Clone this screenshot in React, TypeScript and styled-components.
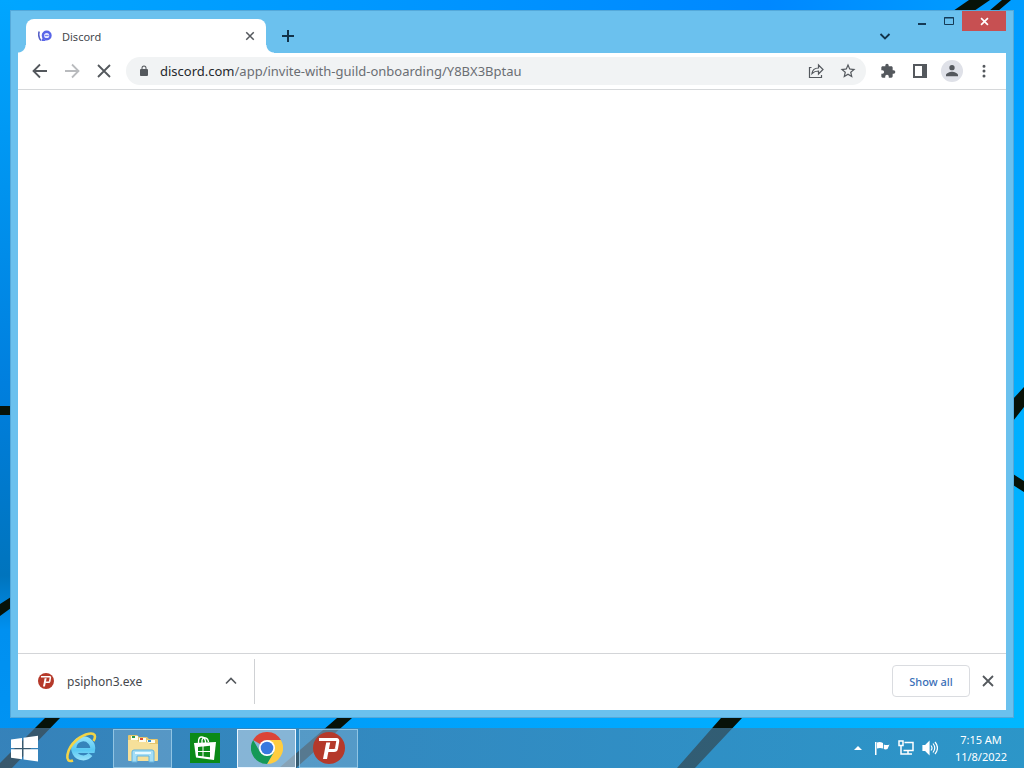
import React from "react";
import styled, { createGlobalStyle, css } from "styled-components";

const GlobalStyle = createGlobalStyle`
  * { box-sizing: border-box; }
  body { margin: 0; font-family: "Noto Sans", "Open Sans", sans-serif; font-size: 11px; }
  button, input { font: inherit; }
  svg { display: block; flex: none; }
`;

const Desktop = styled.div`
  position: relative;
  isolation: isolate;
  display: flex;
  flex-direction: column;
  gap: 10px;
  min-height: 100vh;
  padding-top: 10px;
  overflow: hidden;
`;

const WallpaperArt = styled.svg`
  position: absolute;
  inset: 0;
  z-index: -1;
  width: 100%;
  height: 100%;
`;

const BrowserWindow = styled.main`
  flex: 1;
  display: flex;
  flex-direction: column;
  margin: 0 10px;
  padding: 0 7px 7px;
  background: #6bc1ee;
  border: 1px solid #55a9da;
`;

const TitleBar = styled.header`
  display: flex;
  align-items: flex-end;
  height: 42px;
  padding-left: 8px;
`;

const Tab = styled.div`
  position: relative;
  display: flex;
  align-items: center;
  width: 240px;
  height: 34px;
  padding: 0 8px 0 12px;
  background: #fff;
  border-radius: 8px 8px 0 0;
  color: #45484d;

  &::before,
  &::after {
    content: "";
    position: absolute;
    bottom: 0;
    width: 8px;
    height: 8px;
  }
  &::before {
    right: 100%;
    background: radial-gradient(circle at 0 0, transparent 7px, #fff 8px);
  }
  &::after {
    left: 100%;
    background: radial-gradient(circle at 100% 0, transparent 7px, #fff 8px);
  }
`;

const TabTitle = styled.span`
  flex: 1;
  padding-left: 10px;
`;

const IconButton = styled.button<{ $size?: number; $faded?: boolean }>`
  display: flex;
  flex: none;
  align-items: center;
  justify-content: center;
  width: ${(p) => p.$size ?? 32}px;
  height: ${(p) => Math.min(p.$size ?? 32, 28)}px;
  padding: 0;
  border: 0;
  border-radius: 14px;
  background: transparent;
  color: ${(p) => (p.$faded ? "#b9bbbe" : "#54585d")};
`;

const StripButton = styled(IconButton)`
  height: 34px;
  color: #12334a;
`;

const StripSpacer = styled.div`
  flex: 1;
`;

const CaptionButtons = styled.div`
  display: flex;
  align-self: flex-start;
`;

const CaptionButton = styled.button<{ $close?: boolean }>`
  display: flex;
  align-items: center;
  justify-content: center;
  width: ${(p) => (p.$close ? 44 : 27)}px;
  height: 20px;
  padding: 0;
  border: 0;
  background: ${(p) => (p.$close ? "#c75052" : "transparent")};
  color: ${(p) => (p.$close ? "#fff" : "#153a56")};
`;

const Toolbar = styled.nav`
  display: flex;
  align-items: center;
  height: 37px;
  padding: 0 6px;
  background: #fff;
  border-bottom: 1px solid #d6d8da;
`;

const AddressBar = styled.form`
  display: flex;
  flex: 1;
  align-items: center;
  height: 28px;
  margin: 0 6px;
  padding: 0 2px 0 12px;
  background: #f1f3f4;
  border-radius: 14px;
  color: #54585d;
  font-size: 13px;
`;

const Host = styled.label`
  padding-left: 10px;
  color: #25282c;
`;

const PathInput = styled.input`
  flex: 1;
  min-width: 0;
  padding: 0;
  border: 0;
  outline: 0;
  background: transparent;
  color: #6a6e73;
`;

const Avatar = styled.span`
  display: flex;
  align-items: center;
  justify-content: center;
  width: 22px;
  height: 22px;
  border-radius: 50%;
  background: #dfe1e8;
`;

const Page = styled.section`
  flex: 1;
  background: #fff;
`;

const DownloadShelf = styled.footer`
  display: flex;
  align-items: center;
  height: 57px;
  padding: 0 2px 2px 0;
  background: #fff;
  border-top: 1px solid #d3d5d8;
`;

const DownloadItem = styled.div`
  display: flex;
  align-items: center;
  width: 237px;
  height: 45px;
  padding: 0 7px 0 20px;
  border-right: 1px solid #cfd1d4;
  color: #45484d;
  font-size: 12px;
`;

const FileName = styled.span`
  flex: 1;
  padding-left: 13px;
`;

const ShowAll = styled.button`
  width: 78px;
  height: 32px;
  margin-left: auto;
  margin-right: 2px;
  padding: 0;
  background: #fff;
  border: 1px solid #dadce0;
  border-radius: 4px;
  color: #3a6fb8;
  font-weight: 500;
`;

const Taskbar = styled.footer`
  display: flex;
  align-items: center;
  height: 40px;
  padding-right: 9px;
  background: linear-gradient(90deg, rgba(80, 122, 158, 0.67), rgba(66, 133, 173, 0.67));
`;

const TaskButton = styled.button<{ $state?: "open" | "active" }>`
  display: flex;
  align-items: center;
  justify-content: center;
  width: 59px;
  height: 39px;
  margin-right: 3px;
  padding: 0;
  border: 1px solid transparent;
  background: transparent;
  ${(p) =>
    p.$state === "open" &&
    css`
      border-color: rgba(170, 215, 240, 0.7);
      background: rgba(165, 195, 220, 0.3);
    `}
  ${(p) =>
    p.$state === "active" &&
    css`
      border-color: #eaf6ff;
      background: rgba(190, 212, 230, 0.6);
    `}
`;

const StartButton = styled(TaskButton)`
  width: 48px;
`;

const Tray = styled.div`
  display: flex;
  align-items: center;
  margin-left: auto;
`;

const TrayButton = styled(IconButton)`
  color: #fff;
`;

const Clock = styled.time`
  width: 68px;
  margin-left: 5px;
  color: #fff;
  line-height: 17px;
  text-align: center;
  white-space: nowrap;
`;

function Wallpaper() {
  return (
    <WallpaperArt viewBox="0 0 1024 768" preserveAspectRatio="none" aria-hidden="true">
      <defs>
        <linearGradient id="sky" x1="0" x2="1" y1="0" y2="0">
          <stop offset="0" stopColor="#00a6ff" />
          <stop offset=".75" stopColor="#0088ff" />
          <stop offset="1" stopColor="#00a0ff" />
        </linearGradient>
        <linearGradient id="left" x1="0" x2="0" y1="0" y2="1">
          <stop offset="0" stopColor="#00a6ff" />
          <stop offset=".5" stopColor="#007fde" />
          <stop offset=".75" stopColor="#0074bd" />
          <stop offset=".82" stopColor="#0090f0" />
          <stop offset="1" stopColor="#0094f4" />
        </linearGradient>
        <linearGradient id="right" x1="0" x2="0" y1="0" y2="1">
          <stop offset="0" stopColor="#009cff" />
          <stop offset=".5" stopColor="#00aeff" />
          <stop offset="1" stopColor="#00b8ff" />
        </linearGradient>
        <linearGradient id="ground" x1="0" x2="1" y1="0" y2="0">
          <stop offset="0" stopColor="#0092f2" />
          <stop offset=".6" stopColor="#00a8ff" />
          <stop offset="1" stopColor="#00b8ff" />
        </linearGradient>
      </defs>
      <path fill="url(#sky)" d="M0 0h1024v384H0z" />
      <path fill="url(#ground)" d="M0 384h1024v384H0z" />
      <path fill="url(#left)" d="M0 0h14v768H0z" />
      <path fill="url(#right)" d="M1010 0h14v768h-14z" />
      <g fill="#071208">
        <path d="M953 11 969 0h21l-16 11zM989 11l13-11h9l-13 11z" />
        <path d="M0 406h11v9H0zM0 604l11-7v11l-11 8z" />
        <path d="M1013 399l11-12v20l-11 14zM1013 474l11 7v11l-11-7z" />
        <path d="M45 718h15L12 768H0v-5zM337 718h15l-56 50h-17zM721 718h21l-47 50h-18z" />
      </g>
    </WallpaperArt>
  );
}

type LineIconProps = { d: string; size?: number; width?: number };

function LineIcon({ d, size = 16, width = 2 }: LineIconProps) {
  return (
    <svg width={size} height={size} viewBox="0 0 16 16" fill="none" stroke="currentColor" strokeWidth={width} aria-hidden="true">
      <path d={d} />
    </svg>
  );
}

function SolidIcon({ d, size = 18 }: { d: string; size?: number }) {
  return (
    <svg width={size} height={size} viewBox="0 0 24 24" fill="currentColor" aria-hidden="true">
      <path fillRule="evenodd" d={d} />
    </svg>
  );
}

function DiscordIcon() {
  return (
    <svg width="14" height="14" viewBox="0 0 14 14" fill="none" aria-hidden="true">
      <path d="M1.200 2.500C.3 5.500.8 9 3 11.500" stroke="#5660c8" strokeWidth="1.600" />
      <circle cx="8.700" cy="6.500" r="3.800" stroke="#5865e8" strokeWidth="2.400" fill="#e8eaff" />
      <path d="M6.800 6.500h3.800" stroke="#7a83ee" strokeWidth="1.200" />
      <path d="M4.500 9 3.500 12h4.500z" fill="#5865e8" />
    </svg>
  );
}

function PsiphonIcon({ size }: { size: number }) {
  return (
    <svg width={size} height={size} viewBox="0 0 32 32" fill="none" aria-hidden="true">
      <circle cx="16" cy="16" r="16" fill="#b5392a" />
      <path d="M6 7.500h17.500q1.500 0 1.200 2l-1.200 7q-.4 2-2.500 2h-6.500" stroke="#fff" strokeWidth="3" />
      <path d="M13.200 10.500h4L14 27h-4z" fill="#fff" />
    </svg>
  );
}

function WindowsLogo() {
  return (
    <svg width="27" height="27" viewBox="0 0 27 27" fill="#fff" aria-hidden="true">
      <path d="M0 4.500 11 3v10H0zM12.500 2.800 27 .8V13H12.500zM0 14.300h11v10L0 22.800zM12.500 14.300H27v12.200l-14.500-2z" />
    </svg>
  );
}

function ExplorerEIcon() {
  return (
    <svg width="34" height="34" viewBox="0 0 34 34" fill="none" aria-hidden="true">
      <defs>
        <linearGradient id="ieBlue" x1="0" x2="0" y1="7" y2="31" gradientUnits="userSpaceOnUse">
          <stop offset="0" stopColor="#8fe0fb" />
          <stop offset=".5" stopColor="#58c8f3" />
          <stop offset="1" stopColor="#a2e6fc" />
        </linearGradient>
      </defs>
      <path d="M26.500 23.500A9.500 9.500 0 1 1 28.500 19.500H12" stroke="url(#ieBlue)" strokeWidth="5" />
      <path d="M9 29.500C0 33 2 18 12.500 9 21 2 31 .5 31 5.500c0 1.500-.5 3-1.500 4.500" stroke="#f2d448" strokeWidth="2.600" />
    </svg>
  );
}

function FilesIcon() {
  return (
    <svg width="32" height="30" viewBox="0 0 32 30" aria-hidden="true">
      <path d="M1 3q0-1 1-1h8l2 2h8l2 2h8q1 0 1 1v20H1z" fill="#e5c66d" />
      <path d="M4 3h7v4H4zM12 5h7v4h-7zM20 7h8v3h-8z" fill="#fffdf0" />
      <path d="M5 3h3v2H5z" fill="#2b9a4a" />
      <path d="M13 5h3v2h-3z" fill="#dd4b32" />
      <path d="M21 7h3v2h-3z" fill="#3591d0" />
      <path d="M1 7h9l2 2h9l2 2h8v16q0 1-1 1H2q-1 0-1-1z" fill="#f6e09a" />
      <path d="M5 29V19q0-2 2-2h18q2 0 2 2v10h-5v-6H10v6z" fill="#a5def5" stroke="#61b3df" />
      <path d="M8 20h16" stroke="#e8faff" strokeWidth="2" />
    </svg>
  );
}

function StoreIcon() {
  return (
    <svg width="30" height="30" viewBox="0 0 30 30" fill="none" aria-hidden="true">
      <path d="M0 0h30v30H0z" fill="#0b8a17" />
      <path d="M8.500 11V8.500c0-6 6-6 7 0V10M12 10V7c1-3.500 6-3 6.500 2" stroke="#fff" strokeWidth="1.300" />
      <path d="m4 10 22-1-2 18-18-2.500z" fill="#fff" />
      <path d="m8 14 4.500-.5V18H8zM13.500 13.400 20 12.800V18h-6.500zM8 19h4.500v4.300L8 22.800zM13.500 19H20v5.200l-6.500-.7z" fill="#0b8a17" />
    </svg>
  );
}

function ChromeIcon() {
  return (
    <svg width="32" height="32" viewBox="0 0 32 32" aria-hidden="true">
      <path d="M16 16 2.140 8A16 16 0 0 1 29.860 8z" fill="#db4437" />
      <path d="M16 8h13.860A16 16 0 0 1 16 32l6.930-12z" fill="#ffcd40" />
      <path d="M2.140 8 9.070 20l6.930 4 6.930-4L16 32A16 16 0 0 1 2.140 8z" fill="#159957" />
      <circle cx="16" cy="16" r="8" fill="#fff" />
      <circle cx="16" cy="16" r="6.300" fill="#3879df" />
    </svg>
  );
}

const cross = "M3 3l10 10M13 3 3 13";
const puzzle =
  "M20.500 11H19V7c0-1.100-.9-2-2-2h-4V3.500a2.500 2.500 0 0 0-5 0V5H4c-1.100 0-2 .9-2 2v3.800h1.500a2.700 2.700 0 0 1 0 5.400H2V20c0 1.100.9 2 2 2h3.800v-1.500a2.700 2.700 0 0 1 5.400 0V22H17c1.100 0 2-.9 2-2v-4h1.500a2.500 2.500 0 0 0 0-5z";
const star =
  "M22 9.240l-7.190-.62L12 2 9.190 8.630 2 9.240l5.460 4.730L5.820 21 12 17.270 18.180 21l-1.630-7.030L22 9.240zM12 15.400l-3.760 2.270 1-4.280-3.320-2.880 4.380-.38L12 6.100l1.710 4.040 4.380.38-3.320 2.880 1 4.280L12 15.400z";
const lock =
  "M18 8h-1V6a5 5 0 0 0-10 0v2H6a2 2 0 0 0-2 2v10c0 1.100.9 2 2 2h12a2 2 0 0 0 2-2V10a2 2 0 0 0-2-2zM9 8V6a3 3 0 0 1 6 0v2z";
const person = "M12 11a4 4 0 1 0 0-8 4 4 0 0 0 0 8zM3 20v-2c0-3 6-5 9-5s9 2 9 5v2z";

export default function App() {
  return (
    <>
      <GlobalStyle />
      <Desktop>
        <Wallpaper />
        <BrowserWindow>
          <TitleBar>
            <Tab>
              <DiscordIcon />
              <TabTitle>Discord</TabTitle>
              <IconButton $size={16} aria-label="Close tab">
                <LineIcon d={cross} size={12} />
              </IconButton>
            </Tab>
            <StripButton $size={44} aria-label="New tab">
              <LineIcon d="M8 2v12M2 8h12" />
            </StripButton>
            <StripSpacer />
            <StripButton $size={46} aria-label="Search tabs">
              <LineIcon d="m3.500 6 4.500 4.500L12.500 6" width={1.8} />
            </StripButton>
            <CaptionButtons>
              <CaptionButton aria-label="Minimize">
                <LineIcon d="M4 11h8" />
              </CaptionButton>
              <CaptionButton aria-label="Maximize">
                <svg width="12" height="10" viewBox="0 0 12 10" fill="none" stroke="currentColor" aria-hidden="true">
                  <path d="M1.500 1.500h9v7h-9zM1 2h10" />
                </svg>
              </CaptionButton>
              <CaptionButton $close aria-label="Close">
                <LineIcon d={cross} size={11} width={2.4} />
              </CaptionButton>
            </CaptionButtons>
          </TitleBar>

          <Toolbar aria-label="Browser">
            <IconButton aria-label="Back">
              <LineIcon d="M15 8H2M8 1.500 1.500 8 8 14.500" width={1.8} />
            </IconButton>
            <IconButton $faded aria-label="Forward" disabled>
              <LineIcon d="M1 8h13M8 1.500 14.500 8 8 14.500" width={1.8} />
            </IconButton>
            <IconButton aria-label="Stop loading">
              <LineIcon d="M2 2l12 12M14 2 2 14" width={1.8} />
            </IconButton>
            <AddressBar onSubmit={(e) => e.preventDefault()}>
              <SolidIcon d={lock} size={12} />
              <Host htmlFor="address">discord.com</Host>
              <PathInput id="address" defaultValue="/app/invite-with-guild-onboarding/Y8BX3Bptau" spellCheck={false} />
              <IconButton type="button" aria-label="Share this page">
                <LineIcon d="M3.500 4.500H1.500v10h12V12M4 10.500c.5-4 3-5.500 6.500-5.500V2L15 6.500 10.500 11V8C7.500 8 5.500 9 4 10.500z" width={1.2} />
              </IconButton>
              <IconButton type="button" aria-label="Bookmark this tab">
                <SolidIcon d={star} />
              </IconButton>
            </AddressBar>
            <IconButton aria-label="Extensions">
              <SolidIcon d={puzzle} size={16} />
            </IconButton>
            <IconButton aria-label="Side panel">
              <svg width="14" height="14" viewBox="0 0 14 14" aria-hidden="true">
                <path fill="currentColor" fillRule="evenodd" d="M0 0h14v14H0zM2 2v10h7V2z" />
              </svg>
            </IconButton>
            <IconButton aria-label="Profile">
              <Avatar>
                <SolidIcon d={person} size={16} />
              </Avatar>
            </IconButton>
            <IconButton aria-label="Menu">
              <SolidIcon d="M12 3.500a2 2 0 1 1 0 4 2 2 0 0 1 0-4zM12 10a2 2 0 1 1 0 4 2 2 0 0 1 0-4zM12 16.500a2 2 0 1 1 0 4 2 2 0 0 1 0-4z" />
            </IconButton>
          </Toolbar>

          <Page aria-label="Page content" />

          <DownloadShelf>
            <DownloadItem>
              <PsiphonIcon size={16} />
              <FileName>psiphon3.exe</FileName>
              <IconButton aria-label="Download options">
                <LineIcon d="m3 10.500 5-5 5 5" width={1.6} />
              </IconButton>
            </DownloadItem>
            <ShowAll>Show all</ShowAll>
            <IconButton aria-label="Close downloads">
              <LineIcon d={cross} width={1.8} />
            </IconButton>
          </DownloadShelf>
        </BrowserWindow>

        <Taskbar>
          <StartButton aria-label="Start">
            <WindowsLogo />
          </StartButton>
          <TaskButton aria-label="Internet Explorer">
            <ExplorerEIcon />
          </TaskButton>
          <TaskButton $state="open" aria-label="File Explorer">
            <FilesIcon />
          </TaskButton>
          <TaskButton aria-label="Store">
            <StoreIcon />
          </TaskButton>
          <TaskButton $state="active" aria-label="Google Chrome">
            <ChromeIcon />
          </TaskButton>
          <TaskButton $state="open" aria-label="Psiphon">
            <PsiphonIcon size={32} />
          </TaskButton>
          <Tray>
            <TrayButton $size={24} aria-label="Show hidden icons">
              <svg width="8" height="4" viewBox="0 0 8 4" fill="currentColor" aria-hidden="true">
                <path d="m0 4 4-4 4 4z" />
              </svg>
            </TrayButton>
            <TrayButton $size={24} aria-label="Action center">
              <svg width="16" height="16" viewBox="0 0 16 16" fill="#fff" aria-hidden="true">
                <path d="M1 2h1.500v13H1zM3 2.500q3-1 6 .5v5.500q-3-1-6 0zM9.800 4.500q3 1 5.700 0L13.500 9q-2 .8-3.700 0z" />
              </svg>
            </TrayButton>
            <TrayButton $size={24} aria-label="Network">
              <svg width="16" height="16" viewBox="0 0 16 16" fill="none" stroke="#fff" strokeWidth="1.500" aria-hidden="true">
                <path d="M6.500 2.500H15v8H5.500M10 11v3M6 14h8M1 1h4v4.500H1zM3 6v8h3" />
              </svg>
            </TrayButton>
            <TrayButton $size={24} aria-label="Volume">
              <svg width="16" height="16" viewBox="0 0 16 16" fill="none" stroke="#fff" strokeWidth="1.200" aria-hidden="true">
                <path d="M1 5.500h2.500L7 2v12l-3.500-3.500H1z" fill="#fff" />
                <path d="M9 5.500q2 2.500 0 5M11 3.500q3.500 4.500 0 9M13 2q5 6 0 12" />
              </svg>
            </TrayButton>
            <Clock>
              7:15 AM
              <br />
              11/8/2022
            </Clock>
          </Tray>
        </Taskbar>
      </Desktop>
    </>
  );
}
